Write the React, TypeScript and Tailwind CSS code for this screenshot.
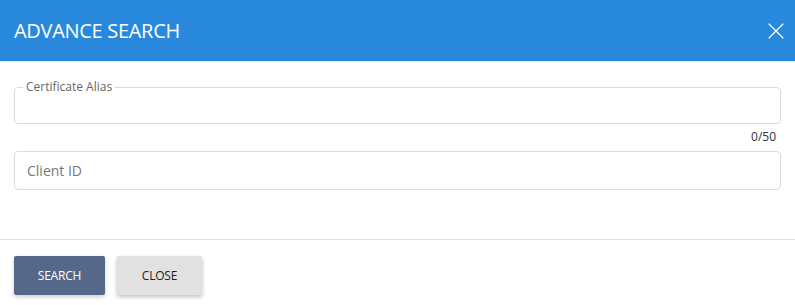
import { X } from 'lucide-react';

export default function App() {
  return (
    <div className="w-[795px] h-[305px] bg-white flex flex-col overflow-hidden" style={{ fontFamily: '"Segoe UI", "Open Sans", sans-serif' }}>
      {/* Header */}
      <div className="h-[62px] shrink-0 bg-[#2889dc] border-b border-[#e3eefa] flex items-center justify-between pl-[14px] pr-[5px]">
        <h1 className="text-[20px] text-white tracking-[-0.3px] leading-none">ADVANCE SEARCH</h1>
        <button className="text-white">
          <X size={28} strokeWidth={1} />
        </button>
      </div>

      {/* Body */}
      <div className="flex-1 px-[14px] pt-[19px]">
        <fieldset className="h-[43px] border border-[#dcdcdc] rounded-[4px] px-[8px] m-0">
          <legend className="px-[3px] text-[12px] text-[#666] leading-none">Certificate Alias</legend>
          <input className="w-full h-[30px] outline-none text-[14px] px-[4px]" />
        </fieldset>
        <div className="text-right text-[12px] text-[#333] pr-[5px] mt-[5px] leading-[16px]">0/50</div>
        <input
          placeholder="Client ID"
          className="mt-[6px] w-full h-[39px] border border-[#dcdcdc] rounded-[4px] px-[12px] text-[14px] placeholder:text-[#777] outline-none"
        />
      </div>

      {/* Footer */}
      <div className="h-[66px] shrink-0 border-t border-[#dedede] flex items-start gap-[12px] px-[14px] pt-[16px]">
        <button className="h-[39px] w-[91px] rounded-[2px] bg-[#56688a] text-white text-[12px] tracking-[-0.2px] shadow-[0_2px_4px_rgba(0,0,0,0.2)]">SEARCH</button>
        <button className="h-[39px] w-[85px] rounded-[2px] bg-[#e1e1e1] text-[#222] text-[12px] tracking-[-0.2px] shadow-[0_2px_4px_rgba(0,0,0,0.25)]">CLOSE</button>
      </div>
    </div>
  );
}
